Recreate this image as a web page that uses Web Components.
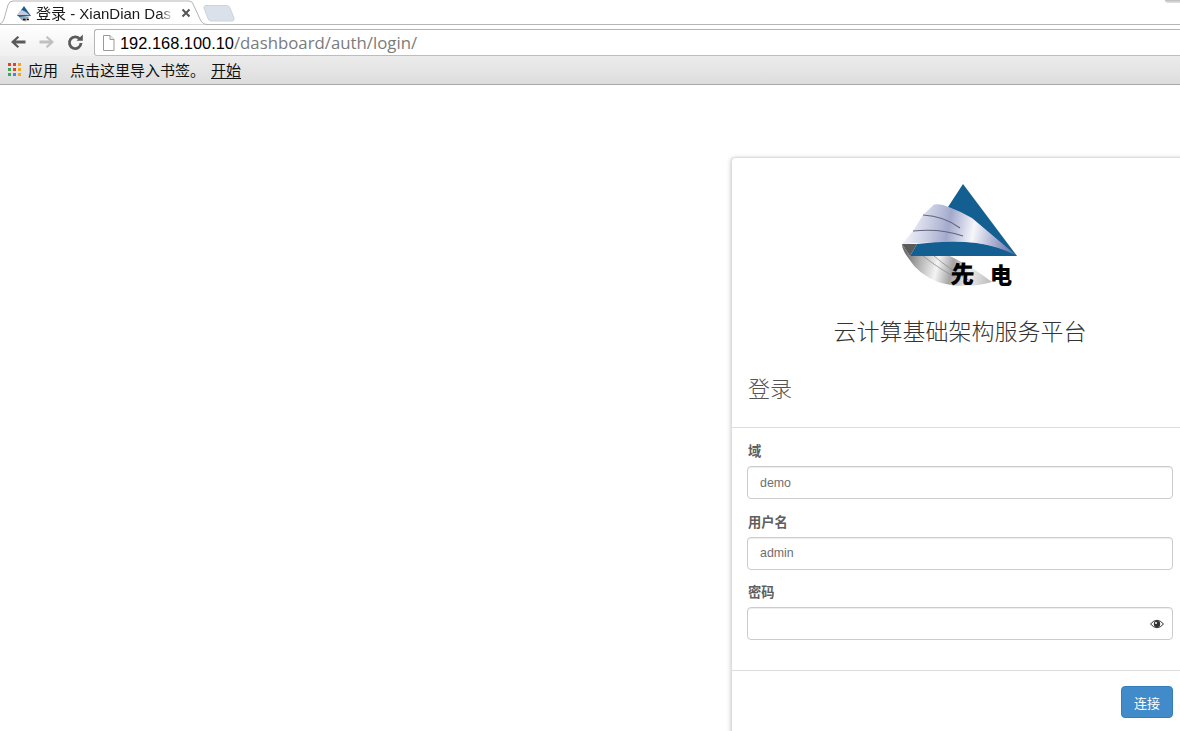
<!DOCTYPE html>
<html lang="zh">
<head>
<meta charset="utf-8">
<title>登录 - XianDian Dashboard</title>
<style>
  html, body { margin: 0; height: 100%; overflow: hidden; background: #fff; }
  body { font-family: "Liberation Sans", "Noto Sans CJK SC", sans-serif; }
</style>
</head>
<body>
<browser-window>
  <login-card>
    <form-field label="域" value="demo"></form-field>
    <form-field label="用户名" value="admin"></form-field>
    <form-field label="密码" secret></form-field>
  </login-card>
</browser-window>

<script>
const FONT = '"Liberation Sans", "Noto Sans CJK SC", sans-serif';

class BrowserTab extends HTMLElement {
  constructor() {
    super();
    this.attachShadow({ mode: 'open' });
    this.shadowRoot.innerHTML = `
      <style>
        :host { display: flex; align-items: flex-start; height: 25px; background: #fff; position: relative; font-family: ${FONT}; }
        .rule { position: absolute; left: 0; right: 0; bottom: 0; height: 1px; background: #b4b4b4; }
        .corner { position: absolute; right: 0; top: 0; width: 15px; height: 3px; background: linear-gradient(#bbb, #e6e6e6); border-radius: 0 0 0 3px; }
        .tab { position: relative; width: 207px; height: 25px; flex: none; z-index: 1; display: flex; align-items: center; padding: 0 16px 0 16px; box-sizing: border-box; }
        .tab > svg.shape { position: absolute; left: 0; top: 0; }
        .fav { position: relative; flex: none; margin: 2px 4px 0 0; }
        .title { position: relative; flex: 1; min-width: 0; white-space: nowrap; font-size: 15px; color: #1a1a1a;
          -webkit-mask-image: linear-gradient(90deg, #000 90%, transparent); mask-image: linear-gradient(90deg, #000 90%, transparent); }
        .close { position: relative; flex: none; margin-left: 7px; }
        .new { flex: none; margin: 5px 0 0 -4px; position: relative; z-index: 2; }
      </style>
      <div class="rule"></div>
      <div class="corner"></div>
      <div class="tab">
        <svg class="shape" width="207" height="25" viewBox="0 0 207 25">
          <path d="M0 24 Q3 23 4 19 L8 5 Q9 1 13 1 L189 1 Q192 1 193 4 L200 19 Q202 24 207 24.500" fill="#fff" stroke="#b4b4b4"/>
        </svg>
        <svg class="fav" width="16" height="16" viewBox="0 0 16 16">
          <path d="M8 0 L15 10 L1 10 Z" fill="#135f91"/>
          <path d="M1 9 Q3 5 6 4 Q10 5 14 9.500 Z" fill="#c5cade"/>
          <path d="M2 9.500 Q8 8.500 15 10 L3 11 Z" fill="#135f91"/>
          <path d="M3 11 Q5 15 10 15.500 L13 11 Z" fill="#a5a5a5"/>
          <path d="M7 13.500 H9.500 M11 13.500 H13" stroke="#111" stroke-width="1.500"/>
        </svg>
        <span class="title">登录 - XianDian Das</span>
        <svg class="close" width="10" height="10" viewBox="0 0 10 10"><path d="M1.500 1.500 L8.500 8.500 M8.500 1.500 L1.500 8.500" stroke="#555" stroke-width="2"/></svg>
      </div>
      <svg class="new" width="32" height="17" viewBox="0 0 32 17">
        <path d="M3 .5 L24 .5 Q26 .5 27 3 L31 13 Q31.500 16 29 16 L8 16 Q6 16 5 13.500 L1 3 Q.5 .5 3 .5 Z" fill="#dbe1ea" stroke="#cdd3dc"/>
      </svg>`;
  }
}
customElements.define('browser-tab', BrowserTab);

class BrowserToolbar extends HTMLElement {
  constructor() {
    super();
    this.attachShadow({ mode: 'open' });
    this.shadowRoot.innerHTML = `
      <style>
        :host { display: flex; align-items: flex-end; height: 31px; background: linear-gradient(#fff, #f0f0f0); font-family: ${FONT}; box-sizing: border-box; }
        .btns { display: flex; align-items: center; gap: 11px; width: 94px; height: 28px; padding-left: 9px; box-sizing: border-box; flex: none; }
        .btns svg:last-child { margin-left: -1px; }
        .omni { flex: 1; height: 27px; box-sizing: border-box; border: 1px solid #b4b4b4; border-right: 0; border-bottom-color: #bdbdbd; border-radius: 3px 0 0 3px; background: #fff; display: flex; align-items: center; padding-left: 7px; gap: 5px; }
        .url { font-size: 16.4px; color: #000; white-space: nowrap; display: flex; align-items: baseline; }
        .path { font-family: "Open Sans", sans-serif; font-size: 16.8px; color: #7b7b7b; }
      </style>
      <div class="btns">
        <svg width="18" height="18" viewBox="0 0 18 18"><path d="M16.500 7.600 H6.800 L10.200 4.400 L8.600 3 L2 9 L8.600 15 L10.200 13.600 L6.800 10.400 H16.500 Z" fill="#5a5a5a"/></svg>
        <svg width="18" height="18" viewBox="0 0 18 18"><path d="M1.500 7.600 H11.200 L7.800 4.400 L9.400 3 L16 9 L9.400 15 L7.800 13.600 L11.200 10.400 H1.500 Z" fill="#c0c0c0"/></svg>
        <svg width="18" height="18" viewBox="0 0 18 18"><path d="M14 6.500 A5.800 5.800 0 1 0 15 10" fill="none" stroke="#5a5a5a" stroke-width="2.800"/><path d="M10.500 7.800 H16.800 V1.500 Z" fill="#5a5a5a"/></svg>
      </div>
      <div class="omni">
        <svg width="13" height="16" viewBox="0 0 13 16" style="flex:none"><path d="M1.500 .5 H8 L12 4.500 V15.500 H1.500 Z" fill="#fff" stroke="#9a9a9a"/><path d="M8 .5 V4.500 H12" fill="#eee" stroke="#9a9a9a"/></svg>
        <span class="url"><span>192.168.100.10</span><span class="path">/dashboard/auth/login/</span></span>
      </div>`;
  }
}
customElements.define('browser-toolbar', BrowserToolbar);

class BookmarkBar extends HTMLElement {
  constructor() {
    super();
    this.attachShadow({ mode: 'open' });
    this.shadowRoot.innerHTML = `
      <style>
        :host { display: flex; align-items: center; height: 29px; box-sizing: border-box; padding: 0 0 2px 8px; background: linear-gradient(#ececec, #dddddd); border-bottom: 1px solid #a8a8a8; font-family: ${FONT}; font-size: 15px; color: #111; white-space: nowrap; }
        .apps { display: grid; grid-template-columns: repeat(3, 3px); gap: 2px; margin-right: 7px; }
        .apps i { width: 3px; height: 3px; }
        .import { margin-left: 12px; width: 141px; }
        u { text-underline-offset: 2px; }
      </style>
      <div class="apps">
        <i style="background:#e0432f"></i><i style="background:#e0432f"></i><i style="background:#f2a51f"></i>
        <i style="background:#3aa757"></i><i style="background:#e0432f"></i><i style="background:#f2a51f"></i>
        <i style="background:#3aa757"></i><i style="background:#4285f4"></i><i style="background:#f2a51f"></i>
      </div>
      <span>应用</span>
      <span class="import">点击这里导入书签。</span>
      <u>开始</u>`;
  }
}
customElements.define('bookmark-bar', BookmarkBar);

class BrowserWindow extends HTMLElement {
  constructor() {
    super();
    this.attachShadow({ mode: 'open' });
    this.shadowRoot.innerHTML = `
      <style>
        :host { display: flex; flex-direction: column; width: 1180px; height: 731px; overflow: hidden; background: #fff; }
        main { flex: 1; min-height: 0; padding: 72px 0 0 731px; display: flex; overflow: hidden; }
      </style>
      <browser-tab></browser-tab>
      <browser-toolbar></browser-toolbar>
      <bookmark-bar></bookmark-bar>
      <main><slot></slot></main>`;
  }
}
customElements.define('browser-window', BrowserWindow);

class XdLogo extends HTMLElement {
  constructor() {
    super();
    this.attachShadow({ mode: 'open' });
    this.shadowRoot.innerHTML = `
      <style>
        :host { display: block; width: 120px; height: 108px; }
        text { font-family: "Noto Sans CJK SC", sans-serif; font-weight: 900; fill: #000; }
      </style>
      <svg width="120" height="108" viewBox="0 0 120 108">
        <defs>
          <linearGradient id="wing" gradientUnits="userSpaceOnUse" x1="5" y1="40" x2="117" y2="62">
            <stop offset="0" stop-color="#f3f4f8"/>
            <stop offset=".2" stop-color="#ccd0e4"/>
            <stop offset=".38" stop-color="#a3a9cd"/>
            <stop offset=".6" stop-color="#f6f6fb"/>
            <stop offset=".78" stop-color="#b0b4d4"/>
            <stop offset=".92" stop-color="#7b82b6"/>
            <stop offset="1" stop-color="#35709c"/>
          </linearGradient>
          <linearGradient id="steel" gradientUnits="userSpaceOnUse" x1="5" y1="70" x2="92" y2="90">
            <stop offset="0" stop-color="#6e6e6e"/>
            <stop offset=".2" stop-color="#b9b9b9"/>
            <stop offset=".38" stop-color="#f4f4f4"/>
            <stop offset=".55" stop-color="#a4a4a4"/>
            <stop offset=".75" stop-color="#eeeeee"/>
            <stop offset="1" stop-color="#bdbdbd"/>
          </linearGradient>
        </defs>
        <!-- blue peak -->
        <path d="M63 0 L117 72 L40 62 L48 23 Z" fill="#135f91"/>
        <!-- silver wing -->
        <path d="M23 31 L34 20.500 Q40 19 50 23.500 Q62 28 72 34 L117 72 Q92 60 70 59 Q40 57 2 60 L13 47 Z" fill="url(#wing)"/>
        <!-- blue band -->
        <path d="M17 60 Q50 56 76 59 Q98 62 117 72 L10 72 Z" fill="#135f91"/>
        <!-- steel underside -->
        <path d="M2 60 Q2 66 9 75 Q18 90 38 98 Q64 106 92 98 Q74 84 50 72 L10 72 Z" fill="url(#steel)"/>
        <path d="M2 60 L17 60 L10 72 Z" fill="#5b5b5b"/>
        <path d="M23 72 Q38 84 60 96 M34 72 Q48 84 70 97" fill="none" stroke="#8d8d8d" stroke-width=".8"/>
        <!-- wing creases -->
        <path d="M23 31 Q44 32 60 44" fill="none" stroke="#62657c" stroke-width="1.100"/>
        <path d="M13 47 Q40 44 63 52" fill="none" stroke="#62657c" stroke-width="1.100"/>
        <text x="51" y="99" font-size="24" transform="skewX(-4) translate(6 0)">先</text>
        <text x="90" y="99" font-size="22">电</text>
      </svg>`;
  }
}
customElements.define('xd-logo', XdLogo);

class LoginCard extends HTMLElement {
  constructor() {
    super();
    this.attachShadow({ mode: 'open' });
    this.shadowRoot.innerHTML = `
      <style>
        :host { display: flex; flex-direction: column; flex: none; width: 458px; height: 600px; box-sizing: border-box; background: #fff; border: 1px solid #ddd; border-radius: 4px 0 0 0; box-shadow: 0 1px 4px rgba(0,0,0,.25); font-family: ${FONT}; color: #333; }
        .brand { display: flex; flex-direction: column; align-items: center; padding-top: 26px; }
        .name { margin-top: 25px; font-size: 23px; line-height: 30px; color: #333; font-weight: 300; }
        .heading { padding: 26px 16px 0; margin: 0; height: 81px; box-sizing: border-box; font-size: 22px; line-height: 34px; font-weight: 300; color: #555; border-bottom: 1px solid #ddd; }
        .fields { display: flex; flex-direction: column; padding: 16px 15px 30px; border-bottom: 1px solid #ddd; }
        .actions { display: flex; justify-content: flex-end; padding: 15px; }
        button { width: 52px; height: 32px; border: 1px solid #357ebd; border-radius: 4px; background: #428bca; color: #fff; font: 13px ${FONT}; padding: 0; }
      </style>
      <div class="brand">
        <xd-logo></xd-logo>
        <div class="name">云计算基础架构服务平台</div>
      </div>
      <h3 class="heading">登录</h3>
      <div class="fields"><slot></slot></div>
      <div class="actions"><button type="button">连接</button></div>`;
  }
}
customElements.define('login-card', LoginCard);

class FormField extends HTMLElement {
  constructor() {
    super();
    this.attachShadow({ mode: 'open' });
    const secret = this.hasAttribute('secret');
    this.shadowRoot.innerHTML = `
      <style>
        :host { display: block; margin-bottom: 15.5px; }
        :host(:last-child) { margin-bottom: 0; }
        label { display: block; font-size: 13.300px; line-height: 15px; font-weight: 700; color: #5f5f5f; margin-bottom: 7px; padding-left: 1px; }
        .box { height: 33px; box-sizing: border-box; border: 1px solid #ccc; border-radius: 4px; box-shadow: inset 0 1px 1px rgba(0,0,0,.075); display: flex; align-items: center; justify-content: space-between; padding: 0 8px 0 12px; font-size: 12.4px; color: #6f6f6f; }
      </style>
      <label></label>
      <div class="box">
        <span class="val"></span>
        ${secret ? `<svg width="14" height="10" viewBox="0 0 14 10"><path d="M.5 5 Q7 -2.500 13.500 5 Q7 12.500 .5 5 Z" fill="#fff" stroke="#333"/><circle cx="7" cy="5" r="3.200" fill="#333"/><circle cx="6" cy="4" r="1" fill="#fff"/></svg>` : ''}
      </div>`;
    this.shadowRoot.querySelector('label').textContent = this.getAttribute('label');
    this.shadowRoot.querySelector('.val').textContent = this.getAttribute('value') || '';
  }
}
customElements.define('form-field', FormField);
</script>
</body>
</html>
